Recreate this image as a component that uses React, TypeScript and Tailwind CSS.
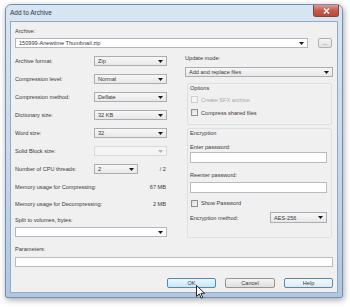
import type { ReactNode } from 'react';

type ComboKind = 'list' | 'edit' | 'disabled';

function DropArrow({ muted }: { muted?: boolean }) {
  return (
    <svg width="5" height="3" viewBox="0 0 5 3" className="shrink-0">
      <path d="M0 0h5L2.5 3z" fill={muted ? '#b4b4b4' : '#1a1a1a'} />
    </svg>
  );
}

function Combo({ text = '', kind = 'list', className }: { text?: string; kind?: ComboKind; className: string }) {
  const look =
    kind === 'edit'
      ? 'bg-white border-[#b3b6bc]'
      : kind === 'disabled'
        ? 'bg-[#f4f4f4] border-[#d8d8d8]'
        : 'bg-gradient-to-b from-[#f7f7f7] to-[#e8e8e8] border-[#aaadb2]';
  return (
    <div className={`flex items-center border pl-[3px] pr-[3px] ${look} ${className}`}>
      <span className="flex-1 truncate leading-[8px]">{text}</span>
      <DropArrow muted={kind === 'disabled'} />
    </div>
  );
}

function Field({ className }: { className: string }) {
  return <div className={`border border-[#b8bbc0] bg-white ${className}`} />;
}

function Check({ label, disabled }: { label: string; disabled?: boolean }) {
  return (
    <div className={`flex items-center gap-[3px] ${disabled ? 'text-[#a8a8a8]' : ''}`}>
      <div
        className={`h-[7px] w-[7px] border ${
          disabled ? 'border-[#d0d0d0] bg-[#f4f4f4]' : 'border-[#8e8f8f] bg-gradient-to-br from-[#dcdcdc] to-[#fafafa]'
        }`}
      />
      <span className="leading-[8px]">{label}</span>
    </div>
  );
}

function Row({ label, children, h = 'h-[18px]' }: { label: string; children?: ReactNode; h?: string }) {
  return (
    <div className={`flex items-center ${h}`}>
      <span className="w-[79px] shrink-0 leading-[8px]">{label}</span>
      {children}
    </div>
  );
}

function Button({ label, kind }: { label: string; kind: 'hover' | 'normal' | 'default' }) {
  const look =
    kind === 'hover'
      ? 'border-[#4b8cbc] bg-gradient-to-b from-[#eef7fd] to-[#c6e6f8]'
      : kind === 'default'
        ? 'border-[#4b8cbc] bg-gradient-to-b from-[#f6f9fc] to-[#dfeaf3]'
        : 'border-[#959595] bg-gradient-to-b from-[#f5f5f5] to-[#dedede]';
  return (
    <div className={`flex h-[10px] items-center justify-center rounded-[2px] border ${look}`}>
      <span className="leading-[8px]">{label}</span>
    </div>
  );
}

export default function App() {
  return (
    <div className="relative h-[307px] w-[350px] overflow-hidden bg-white pl-[5px] pt-[4px] font-['Liberation_Sans',Arial,sans-serif] text-[5.6px] text-[#383838]">
      {/* window frame */}
      <div className="relative flex h-[294px] w-[338px] flex-col rounded-t-[6px] rounded-b-[2px] border border-[#7290b4] bg-gradient-to-b from-[#d8e5f2] via-[#c9daed] to-[#afc7e2] shadow-[1px_2px_6px_rgba(0,0,0,0.35)]">
        {/* title bar */}
        <div className="flex h-[16px] items-center pl-[4px]">
          <span className="text-[6.5px] leading-[8px] text-[#27364a]">Add to Archive</span>
        </div>
        <div className="absolute right-[3px] top-0 flex h-[12px] w-[26px] items-center justify-center rounded-b-[3px] border border-t-0 border-[#8a4038] bg-gradient-to-b from-[#dc9a8e] via-[#c85a4b] to-[#bb4a3c]">
          <svg width="7" height="6" viewBox="0 0 7 6">
            <path d="M1 0.5l5 5M6 0.5l-5 5" stroke="#fff" strokeWidth="1.4" />
          </svg>
        </div>

        {/* client area */}
        <div className="mx-[4px] flex h-[272px] flex-col border border-[#94a9c3] bg-[#f0f0f0] px-[4px] pt-[5px]">
          <span className="leading-[8px]">Archive:</span>
          <div className="mt-[3px] flex items-center gap-[10px]">
            <Combo kind="edit" text="150999-Anewtime Thumbnail.zip" className="h-[10px] w-[293px]" />
            <div className="flex h-[10px] w-[14px] items-center justify-center rounded-[2px] border border-[#b0b0b0] bg-gradient-to-b from-[#f4f4f4] to-[#e0e0e0]">
              <span className="leading-[6px]">...</span>
            </div>
          </div>

          <div className="mt-[4px] flex gap-[18px]">
            {/* left column */}
            <div className="flex w-[152px] flex-col">
              <Row label="Archive format:">
                <Combo text="Zip" className="h-[10px] w-[73px]" />
              </Row>
              <Row label="Compression level:">
                <Combo text="Normal" className="h-[10px] w-[73px]" />
              </Row>
              <Row label="Compression method:">
                <Combo text="Deflate" className="h-[10px] w-[73px]" />
              </Row>
              <Row label="Dictionary size:">
                <Combo text="32 KB" className="h-[10px] w-[73px]" />
              </Row>
              <Row label="Word size:">
                <Combo text="32" className="h-[10px] w-[73px]" />
              </Row>
              <Row label="Solid Block size:">
                <Combo kind="disabled" className="h-[10px] w-[73px]" />
              </Row>
              <Row label="Number of CPU threads:">
                <Combo text="2" className="h-[10px] w-[44px]" />
                <span className="ml-auto pr-[1px] leading-[8px]">/ 2</span>
              </Row>
              <div className="flex h-[18px] items-center justify-between pr-[1px]">
                <span className="leading-[8px]">Memory usage for Compressing:</span>
                <span className="leading-[8px]">67 MB</span>
              </div>
              <div className="flex h-[15px] items-center justify-between pr-[1px]">
                <span className="leading-[8px]">Memory usage for Decompressing:</span>
                <span className="leading-[8px]">2 MB</span>
              </div>
              <span className="mt-[5px] leading-[8px]">Split to volumes, bytes:</span>
              <Combo kind="edit" className="mt-[3px] h-[10px] w-[152px]" />
            </div>

            {/* right column */}
            <div className="flex w-[148px] flex-col pt-[2px]">
              <span className="leading-[8px]">Update mode:</span>
              <Combo text="Add and replace files" className="mt-[5px] h-[10px] w-[148px]" />

              <div className="ml-[2px] mt-[6px] flex h-[42px] w-[145px] flex-col rounded-[2px] border border-[#d9e1e6] pl-[2px]">
                <span className="leading-[8px]">Options</span>
                <div className="mt-[1px] flex h-[13px] items-center pl-[1px]">
                  <Check label="Create SFX archive" disabled />
                </div>
                <div className="flex h-[13px] items-center pl-[1px]">
                  <Check label="Compress shared files" />
                </div>
              </div>

              <div className="ml-[2px] mt-[3px] flex h-[110px] w-[145px] flex-col rounded-[2px] border border-[#d9e1e6] pl-[2px]">
                <span className="leading-[8px]">Encryption</span>
                <span className="mt-[6px] leading-[8px]">Enter password:</span>
                <Field className="mt-[1px] h-[11px] w-[137px]" />
                <span className="mt-[8px] leading-[8px]">Reenter password:</span>
                <Field className="mt-[3px] h-[11px] w-[137px]" />
                <div className="mt-[5px] flex h-[10px] items-center pl-[1px]">
                  <Check label="Show Password" />
                </div>
                <div className="mt-[4px] flex h-[11px] items-center">
                  <span className="w-[80px] shrink-0 leading-[8px]">Encryption method:</span>
                  <Combo text="AES-256" className="h-[11px] w-[57px]" />
                </div>
              </div>
            </div>
          </div>

          <span className="mt-[7px] leading-[8px]">Parameters:</span>
          <Field className="mt-[4px] h-[10px] w-[318px]" />

          <div className="mt-[11px] flex justify-end gap-[9px]">
            <div className="w-[49px]">
              <Button label="OK" kind="hover" />
            </div>
            <div className="w-[50px]">
              <Button label="Cancel" kind="normal" />
            </div>
            <div className="w-[49px]">
              <Button label="Help" kind="default" />
            </div>
          </div>
        </div>
      </div>

      {/* mouse pointer over OK */}
      <svg className="absolute left-[196px] top-[285px]" width="9" height="14" viewBox="0 0 9 14">
        <path
          d="M0.5 0.5v11l2.8-2.6 1.9 4.3 1.6-0.7-1.9-4.2h3.7z"
          fill="#fff"
          stroke="#111"
          strokeWidth="0.9"
          strokeLinejoin="round"
        />
      </svg>
    </div>
  );
}
